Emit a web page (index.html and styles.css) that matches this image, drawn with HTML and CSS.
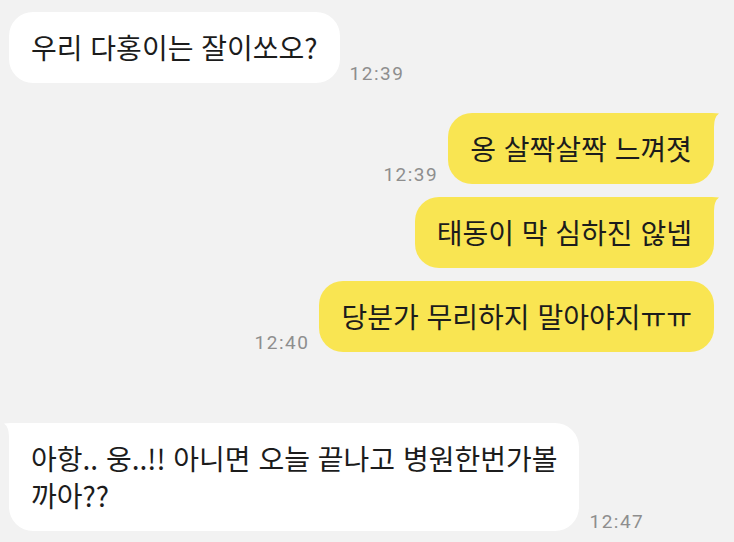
FILE: index.html
```html
<!DOCTYPE html>
<html lang="ko">
<head>
    <meta charset="UTF-8">
    <meta name="viewport" content="width=device-width, initial-scale=1.0">
    <title>채팅</title>
    <link rel="stylesheet" href="styles.css">
</head>
<body>
    <div class="chat">
        <div class="row in first">
            <div class="bubble">우리 다홍이는 잘이쏘오?</div>
            <span class="time">12:39</span>
        </div>

        <div class="row out group">
            <span class="time">12:39</span>
            <div class="bubble tail">
                옹 살짝살짝 느껴졋
                <svg class="tail-mark" viewBox="0 0 20 16"><path d="M0 0 H12 Q16 0 19 0.5 Q14 4 14 14 V16 H0 Z"/></svg>
            </div>
        </div>
        <div class="row out">
            <div class="bubble tail">
                태동이 막 심하진 않넵
                <svg class="tail-mark" viewBox="0 0 20 16"><path d="M0 0 H12 Q16 0 19 0.5 Q14 4 14 14 V16 H0 Z"/></svg>
            </div>
        </div>
        <div class="row out">
            <span class="time">12:40</span>
            <div class="bubble">당분가 무리하지 말아야지ㅠㅠ</div>
        </div>

        <div class="row in later">
            <div class="bubble tail">
                아항.. 웅..!! 아니면 오늘 끝나고 병원한번가볼<br>까아??
                <svg class="tail-mark" viewBox="0 0 20 16"><path d="M0 0 H12 Q16 0 19 0.5 Q14 4 14 14 V16 H0 Z"/></svg>
            </div>
            <span class="time">12:47</span>
        </div>
    </div>
</body>
</html>
```

FILE: styles.css
```css
body {
    margin: 0;
    background: #f2f2f2;
    font-family: 'Noto Sans CJK KR', 'Noto Sans', sans-serif;
    color: #1c1c1c;
}
.chat {
    display: flex;
    flex-direction: column;
    padding: 12px 20px 0 9px;
}
.row {
    display: flex;
    align-items: flex-end;
    gap: 10px;
    margin-top: 13px;
}
.row.first {
    margin-top: 0;
}
.row.group {
    margin-top: 30px;
}
.row.later {
    margin-top: 71px;
}
.row.in {
    justify-content: flex-start;
}
.row.out {
    justify-content: flex-end;
}
.bubble {
    position: relative;
    background: #fff;
    font-size: 28px;
    line-height: 37px;
    padding: 17px 22px;
    border-radius: 24px;
    white-space: nowrap;
}
.row.out .bubble {
    background: #f9e552;
}
.row.out .bubble.tail {
    border-top-right-radius: 8px;
}
.row.in .bubble.tail {
    border-top-left-radius: 8px;
}
.tail-mark {
    position: absolute;
    top: 0;
    width: 20px;
    height: 16px;
    overflow: visible;
}
.row.out .tail-mark {
    right: -6px;
    fill: #f9e552;
}
.row.in .tail-mark {
    left: -6px;
    fill: #fff;
    transform: scaleX(-1);
}
.time {
    font-family: Roboto, 'Liberation Sans', sans-serif;
    font-size: 19px;
    line-height: 19px;
    letter-spacing: 1.5px;
    color: #8e8e8e;
}
```
